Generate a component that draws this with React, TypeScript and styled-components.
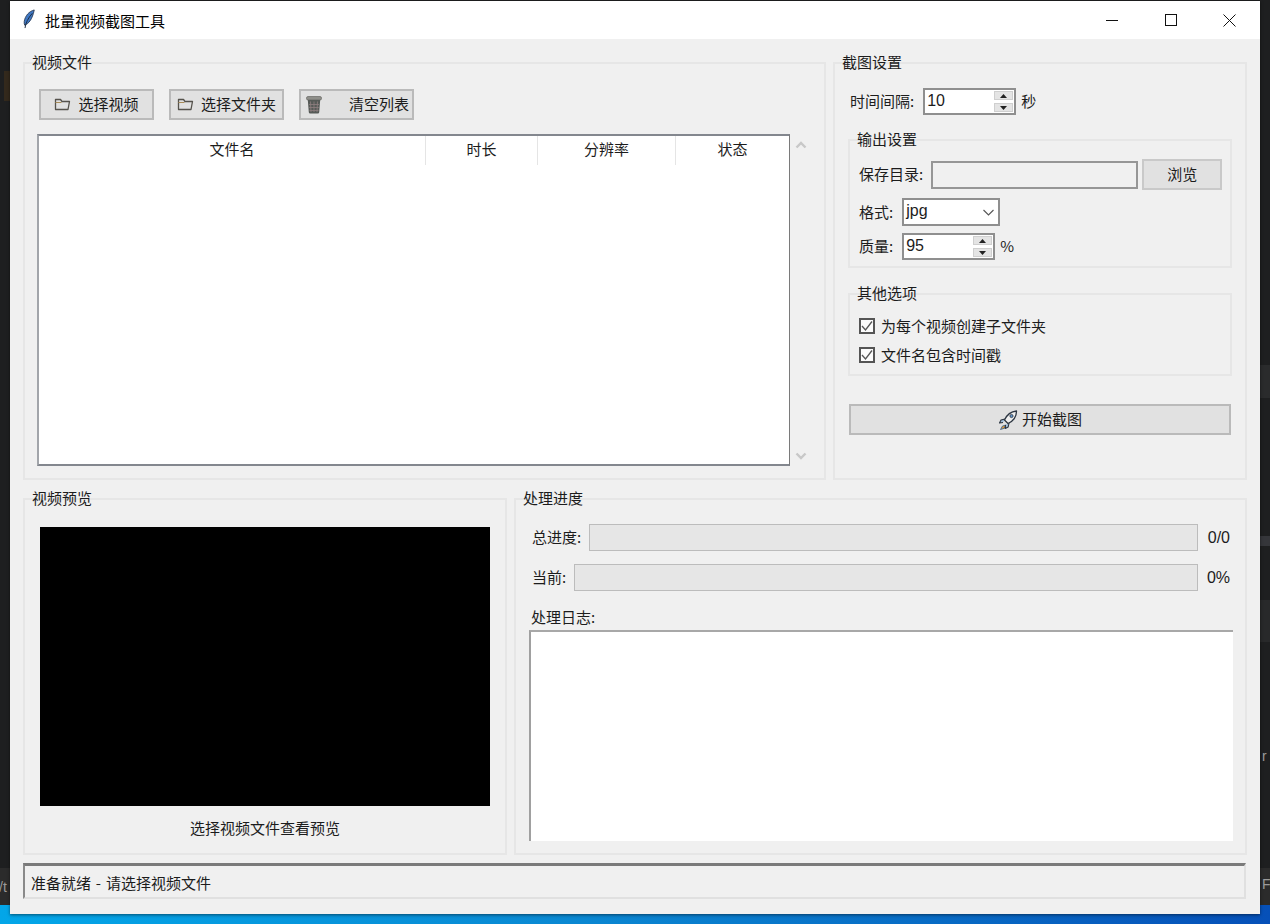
import styled, { createGlobalStyle } from "styled-components";
import type { ReactNode } from "react";

const GlobalStyle = createGlobalStyle`
  html, body {
    margin: 0;
    padding: 0;
    width: 1270px;
    height: 924px;
    overflow: hidden;
    background: #1e1f20;
  }
  * {
    box-sizing: border-box;
  }
`;

function FolderIcon() {
  return (
    <svg width="17" height="13" viewBox="0 0 17 13" fill="none">
      <path d="M1.5 11.5V1.5h5l1.5 2h7.5l-1.5 8z" stroke="#55524c" strokeWidth="1.3" strokeLinejoin="round" />
      <path d="M1.5 4.5h6" stroke="#a88b58" strokeWidth="1" />
    </svg>
  );
}

function TrashIcon() {
  return (
    <svg width="16" height="18" viewBox="0 0 16 18">
      <rect x="0.5" y="0.5" width="15" height="3.5" rx="1.5" fill="#8f8f8a" stroke="#5a5a58" strokeWidth="0.6" />
      <path d="M1.8 4h12.4l-1 12.2q-.1 1.3-1.4 1.3H4.2q-1.300 0-1.400-1.300z" fill="#565a57" />
      <path d="M4.500 5.500l.5 10.500M8 5.500V16M11.500 5.500L11 16M3 8.500h10M3.200 11.500h9.600M3.500 14.500h9" stroke="#8f7f80" strokeWidth="0.8" />
    </svg>
  );
}

function RocketIcon() {
  return (
    <svg width="20" height="20" viewBox="0 0 20 20" fill="none">
      <path d="M8 15l-3.500 1L2.500 19.500l3.800-1.200z" fill="#e0973a" stroke="#2d5f92" strokeWidth="0.8" />
      <path d="M7 9L3 10l-1.500 3 3.500-.5M11 13l-.8 4-3 1.500.3-3.500" fill="#9dbbd8" stroke="#2b3440" strokeWidth="1.1" strokeLinejoin="round" />
      <path d="M18.500 1C13 1.500 9 4.500 6.500 10L10 13.500c5.500-2.500 8.500-6.500 8.500-12.500z" fill="#efefef" stroke="#2b3440" strokeWidth="1.3" strokeLinejoin="round" />
      <circle cx="13.5" cy="6" r="1.6" fill="#5b8fc4" stroke="#2b3440" strokeWidth="0.8" />
    </svg>
  );
}

function FeatherIcon() {
  return (
    <svg width="14" height="20" viewBox="0 0 14 21">
      <path d="M12.500 1C7 2.500 3 7 2 13c-.2 1.500 0 3 .5 4 4-1.500 8-6 10-16z" fill="#3f78c4" stroke="#26364f" strokeWidth="0.9" />
      <path d="M2.800 20c.6-5 3.200-10.500 7.700-15.500" stroke="#1c2a3e" strokeWidth="1" fill="none" />
    </svg>
  );
}

function Spinner() {
  return (
    <SpinButtons>
      <SpinButton>
        <svg width="7" height="4" viewBox="0 0 7 4"><path d="M3.500 0L7 4H0z" fill="#222" /></svg>
      </SpinButton>
      <SpinButton>
        <svg width="7" height="4" viewBox="0 0 7 4"><path d="M0 0h7L3.500 4z" fill="#222" /></svg>
      </SpinButton>
    </SpinButtons>
  );
}

function Check({ children }: { children: ReactNode }) {
  return (
    <CheckRow>
      <CheckBox>
        <svg width="12" height="12" viewBox="0 0 12 12" fill="none">
          <path d="M1 6l3.500 4L11 1.500" stroke="#555" strokeWidth="1.3" />
        </svg>
      </CheckBox>
      <ButtonText>{children}</ButtonText>
    </CheckRow>
  );
}

export default function App() {
  return (
    <>
      <GlobalStyle />
      <Desktop>
        <EdgeBand $left={4} $top={71} $height={30} $color="#33291c" />
        <EdgeBand $left={1260} $top={365} $height={33} $color="#2a2b2c" />
        <EdgeBand $left={1260} $top={536} $height={10} $color="#35363a" />
        <EdgeBand $left={1260} $top={600} $height={42} $color="#28292a" />
        <EdgeText $left={-1} $top={877}>/t</EdgeText>
        <EdgeText $left={1262} $top={874}>F</EdgeText>
        <EdgeText $left={1262} $top={746}>r</EdgeText>
        <Window>
          <TitleBar>
            <TitleIcon><FeatherIcon /></TitleIcon>
            <TitleText>批量视频截图工具</TitleText>
            <WindowButtons>
              <WindowButton>
                <svg width="12" height="12" viewBox="0 0 12 12"><path d="M0 6.500h12" stroke="#111" /></svg>
              </WindowButton>
              <WindowButton>
                <svg width="12" height="12" viewBox="0 0 12 12"><rect x="0.5" y="0.5" width="11" height="11" fill="none" stroke="#111" /></svg>
              </WindowButton>
              <WindowButton>
                <svg width="13" height="13" viewBox="0 0 13 13"><path d="M.5.500l12 12M12.500.500l-12 12" stroke="#111" /></svg>
              </WindowButton>
            </WindowButtons>
          </TitleBar>

          <Content>
            <TopRow>
              <FilesGroup>
                <GroupTitle>视频文件</GroupTitle>
                <Toolbar>
                  <ToolButton>
                    <FolderIcon />
                    <ButtonText>选择视频</ButtonText>
                  </ToolButton>
                  <ToolButton>
                    <FolderIcon />
                    <ButtonText>选择文件夹</ButtonText>
                  </ToolButton>
                  <ToolButton $spread>
                    <TrashIcon />
                    <ButtonText>清空列表</ButtonText>
                  </ToolButton>
                </Toolbar>
                <ListRow>
                  <FileList>
                    <ListHead>
                      <HeadCell $width={387}>文件名</HeadCell>
                      <HeadCell $width={112}>时长</HeadCell>
                      <HeadCell $width={138}>分辨率</HeadCell>
                      <HeadCell $width={113} $last>状态</HeadCell>
                    </ListHead>
                  </FileList>
                  <ScrollBar>
                    <svg width="12" height="8" viewBox="0 0 12 8" fill="none"><path d="M1.500 6.500L6 2l4.500 4.500" stroke="#c8c8c8" strokeWidth="2.4" /></svg>
                    <svg width="12" height="8" viewBox="0 0 12 8" fill="none"><path d="M1.500 1.500L6 6l4.500-4.500" stroke="#c8c8c8" strokeWidth="2.4" /></svg>
                  </ScrollBar>
                </ListRow>
              </FilesGroup>

              <SettingsGroup>
                <GroupTitle>截图设置</GroupTitle>
                <IntervalRow>
                  <Label>时间间隔:</Label>
                  <SpinBox>
                    <SpinValue>10</SpinValue>
                    <Spinner />
                  </SpinBox>
                  <UnitLabel>秒</UnitLabel>
                </IntervalRow>

                <OutputGroup>
                  <GroupTitle>输出设置</GroupTitle>
                  <DirRow>
                    <Label>保存目录:</Label>
                    <DirInput />
                    <BrowseButton><ButtonText>浏览</ButtonText></BrowseButton>
                  </DirRow>
                  <FormRow>
                    <Label>格式:</Label>
                    <Select>
                      <SpinValue>jpg</SpinValue>
                      <svg width="11" height="7" viewBox="0 0 11 7" fill="none"><path d="M.5 1l5 5 5-5" stroke="#555" strokeWidth="1.1" /></svg>
                    </Select>
                  </FormRow>
                  <QualityRow>
                    <Label>质量:</Label>
                    <SpinBox>
                      <SpinValue>95</SpinValue>
                      <Spinner />
                    </SpinBox>
                    <UnitLabel>%</UnitLabel>
                  </QualityRow>
                </OutputGroup>

                <OptionsGroup>
                  <GroupTitle>其他选项</GroupTitle>
                  <Check>为每个视频创建子文件夹</Check>
                  <Check>文件名包含时间戳</Check>
                </OptionsGroup>

                <StartButton>
                  <RocketIcon />
                  <ButtonText>开始截图</ButtonText>
                </StartButton>
              </SettingsGroup>
            </TopRow>

            <BottomRow>
              <PreviewGroup>
                <GroupTitle>视频预览</GroupTitle>
                <PreviewScreen />
                <PreviewCaption>选择视频文件查看预览</PreviewCaption>
              </PreviewGroup>

              <ProgressGroup>
                <GroupTitle>处理进度</GroupTitle>
                <ProgressRow>
                  <Label>总进度:</Label>
                  <ProgressBar />
                  <ProgressValue>0/0</ProgressValue>
                </ProgressRow>
                <ProgressRow>
                  <Label>当前:</Label>
                  <ProgressBar />
                  <ProgressValue>0%</ProgressValue>
                </ProgressRow>
                <LogLabel>处理日志:</LogLabel>
                <LogBox />
              </ProgressGroup>
            </BottomRow>

            <StatusBar>准备就绪 - 请选择视频文件</StatusBar>
          </Content>
        </Window>
      </Desktop>
    </>
  );
}

const Desktop = styled.div`
  position: relative;
  width: 1270px;
  height: 924px;
  padding: 1px 10px 10px;
  background: linear-gradient(to bottom, #1e1f20 868px, #2b2b2b 868px, #2b2b2b 905px, transparent 905px),
    linear-gradient(to right, #03a6e8 0, #0a88d2 45%, #0650b8 100%);
  font-family: "Noto Sans CJK SC", "Liberation Sans", sans-serif;
  font-size: 15px;
  color: #1c1c1c;
`;

const EdgeBand = styled.div<{ $left: number; $top: number; $height: number; $color: string }>`
  position: absolute;
  left: ${(p) => p.$left}px;
  top: ${(p) => p.$top}px;
  width: 10px;
  height: ${(p) => p.$height}px;
  background: ${(p) => p.$color};
`;

const EdgeText = styled.span<{ $left: number; $top: number }>`
  position: absolute;
  left: ${(p) => p.$left}px;
  top: ${(p) => p.$top}px;
  font-family: "Liberation Sans", sans-serif;
  font-size: 14px;
  line-height: 20px;
  color: #9a9a9a;
`;

const Window = styled.div`
  position: relative;
  width: 1250px;
  height: 913px;
  background: #f0f0f0;
  display: flex;
  flex-direction: column;
  box-shadow: 0 1px 3px rgba(0, 0, 0, 0.5);
`;

const TitleBar = styled.div`
  height: 38px;
  flex: none;
  background: #fff;
  display: flex;
  align-items: center;
  padding-left: 12px;
`;

const TitleIcon = styled.span`
  display: flex;
  width: 23px;
  margin-bottom: 3px;
`;

const TitleText = styled.span`
  font-size: 15px;
  color: #000;
`;

const WindowButtons = styled.div`
  margin-left: auto;
  margin-right: 1px;
  display: flex;
  height: 100%;
`;

const WindowButton = styled.div`
  width: 59px;
  display: flex;
  align-items: center;
  justify-content: center;
`;

const Content = styled.div`
  flex: 1;
  min-height: 0;
  display: flex;
  flex-direction: column;
  padding: 23px 13px 0;
`;

const TopRow = styled.div`
  display: flex;
  gap: 7px;
  height: 418px;
  flex: none;
`;

const BottomRow = styled.div`
  display: flex;
  gap: 7px;
  height: 357px;
  flex: none;
  margin-top: 18px;
`;

const Group = styled.div`
  position: relative;
  border: 2px solid #e6e6e6;
`;

const GroupTitle = styled.div`
  position: absolute;
  top: -12px;
  left: 5px;
  line-height: 20px;
  height: 20px;
  padding: 0 2px;
  font-size: 15px;
  white-space: nowrap;
`;

const FilesGroup = styled(Group)`
  width: 803px;
  padding: 25px 13px 12px 12px;
  display: flex;
  flex-direction: column;
`;

const Toolbar = styled.div`
  display: flex;
  gap: 15px;
  height: 31px;
  flex: none;
  margin-left: 2px;
`;

const ButtonText = styled.span`
  padding-bottom: 2px;
`;

const ToolButton = styled.div<{ $spread?: boolean }>`
  width: 115px;
  height: 31px;
  background: #e1e1e1;
  border: 2px solid #bababa;
  display: flex;
  align-items: center;
  justify-content: ${(p) => (p.$spread ? "space-between" : "center")};
  padding: ${(p) => (p.$spread ? "0 3px 0 5px" : "0")};
  gap: 7px;
  font-size: 15px;
  white-space: nowrap;
`;

const ListRow = styled.div`
  display: flex;
  flex: 1;
  min-height: 0;
  margin-top: 14px;
`;

const FileList = styled.div`
  width: 753px;
  height: 100%;
  background: #fff;
  border-style: solid;
  border-width: 2px 1px 2px 2px;
  border-color: #83878e #7a7a7a #83878e #a2a5aa;
`;

const ListHead = styled.div`
  display: flex;
  height: 29px;
`;

const HeadCell = styled.div<{ $width: number; $last?: boolean }>`
  width: ${(p) => p.$width}px;
  flex: none;
  text-align: center;
  line-height: 26px;
  font-size: 15px;
  border-right: ${(p) => (p.$last ? "0" : "1px solid #e5e5e5")};
`;

const ScrollBar = styled.div`
  width: 22px;
  display: flex;
  flex-direction: column;
  justify-content: space-between;
  align-items: center;
  padding: 7px 0 6px;
`;

const SettingsGroup = styled(Group)`
  width: 414px;
  padding: 24px 13px 0 15px;
`;

const Label = styled.span`
  font-size: 15px;
  white-space: nowrap;
  padding-bottom: 2px;
`;

const UnitLabel = styled(Label)`
  margin-left: -4px;
`;

const IntervalRow = styled.div`
  display: flex;
  align-items: center;
  height: 27px;
  gap: 9px;
`;

const SpinBox = styled.div`
  width: 93px;
  height: 27px;
  background: #fff;
  border: 2px solid #8f8f8f;
  display: flex;
  align-items: center;
  justify-content: space-between;
  padding: 0 1px 0 2px;
  font-family: "Liberation Sans", sans-serif;
  font-size: 16px;
`;

const SpinValue = styled.span`
  padding-bottom: 2px;
`;

const SpinButtons = styled.div`
  display: flex;
  flex-direction: column;
  gap: 3px;
`;

const SpinButton = styled.div`
  width: 19px;
  height: 9px;
  background: #e4e4e4;
  border: 1px solid #cfcfcf;
  display: flex;
  align-items: center;
  justify-content: center;
`;

const OutputGroup = styled(Group)`
  margin-top: 24px;
  width: 384px;
  height: 129px;
  padding: 18px 8px 0 9px;
  margin-left: -2px;
`;

const DirRow = styled.div`
  display: flex;
  align-items: center;
  height: 31px;
`;

const DirInput = styled.div`
  width: 208px;
  height: 28px;
  background: #f0f0f0;
  border: 2px solid #969696;
  margin-left: 8px;
  margin-right: 4px;
`;

const BrowseButton = styled.div`
  width: 80px;
  height: 31px;
  background: #e1e1e1;
  border: 2px solid #c9c9c9;
  display: flex;
  align-items: center;
  justify-content: center;
  font-size: 15px;
`;

const FormRow = styled.div`
  display: flex;
  align-items: center;
  gap: 9px;
  height: 28px;
  margin-top: 8px;
`;

const Select = styled.div`
  width: 98px;
  height: 28px;
  background: #fff;
  border: 2px solid #8f8f8f;
  padding: 0 4px 0 2px;
  display: flex;
  align-items: center;
  justify-content: space-between;
  font-family: "Liberation Sans", sans-serif;
  font-size: 16px;
`;

const QualityRow = styled(FormRow)`
  height: 27px;
  margin-top: 7px;
`;

const OptionsGroup = styled(Group)`
  margin-top: 25px;
  width: 384px;
  height: 83px;
  margin-left: -2px;
  padding: 23px 0 0 9px;
  display: flex;
  flex-direction: column;
  gap: 13px;
`;

const CheckRow = styled.div`
  display: flex;
  align-items: center;
  gap: 6px;
  height: 16px;
  font-size: 15px;
  white-space: nowrap;
`;

const CheckBox = styled.div`
  width: 16px;
  height: 16px;
  background: #fbfbfb;
  border: 2px solid #555;
  display: flex;
  align-items: center;
  justify-content: center;
`;

const StartButton = styled.div`
  width: 382px;
  height: 31px;
  margin-top: 28px;
  margin-left: -1px;
  background: #e1e1e1;
  border: 2px solid #bababa;
  display: flex;
  align-items: center;
  justify-content: center;
  gap: 4px;
  font-size: 15px;
`;

const PreviewGroup = styled(Group)`
  width: 484px;
  padding: 27px 0 0 15px;
`;

const PreviewScreen = styled.div`
  width: 450px;
  height: 279px;
  background: #000;
`;

const PreviewCaption = styled.div`
  width: 450px;
  text-align: center;
  margin-top: 12px;
  font-size: 15px;
  line-height: 20px;
`;

const ProgressGroup = styled(Group)`
  width: 733px;
  padding: 24px 15px 0 13px;
  display: flex;
  flex-direction: column;
`;

const ProgressRow = styled.div`
  display: flex;
  align-items: center;
  height: 27px;
  gap: 8px;
  margin-bottom: 13px;
  padding-left: 3px;
`;

const ProgressBar = styled.div`
  flex: 1;
  height: 27px;
  background: #e6e6e6;
  border: 1px solid #bcbcbc;
`;

const ProgressValue = styled.span`
  width: 24px;
  flex: none;
  font-family: "Liberation Sans", sans-serif;
  font-size: 16px;
  text-align: right;
`;

const LogLabel = styled.div`
  font-size: 15px;
  line-height: 20px;
  margin: 3px 0 3px 2px;
`;

const LogBox = styled.div`
  width: 704px;
  height: 211px;
  background: #fff;
  border-left: 2px solid #a0a0a0;
  border-top: 2px solid #a8a8a8;
`;

const StatusBar = styled.div`
  flex: none;
  width: 1223px;
  height: 36px;
  margin-top: 8px;
  border: 2px solid #e0e0e0;
  border-top: 3px solid #7a7a7a;
  border-left: 2px solid #8a8a8a;
  padding: 2px 0 0 6px;
  display: flex;
  align-items: center;
  font-size: 15px;
  word-spacing: 1.5px;
`;
